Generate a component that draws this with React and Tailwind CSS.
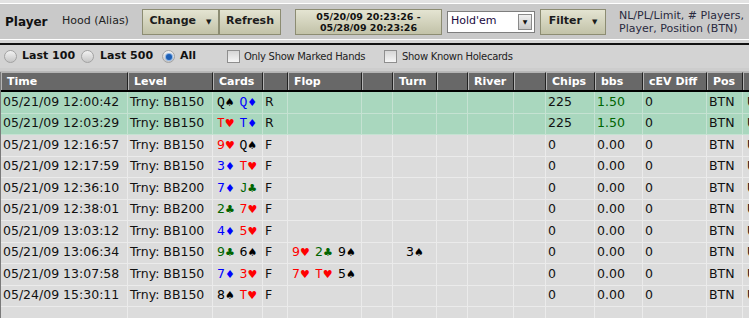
import React from "react";

const font = "font-['DejaVu_Sans',Verdana,sans-serif]";

const COLS = [
  { key: "time", label: "Time", w: "w-[127px]" },
  { key: "level", label: "Level", w: "w-[85px]" },
  { key: "cards", label: "Cards", w: "w-[50px]" },
  { key: "act", label: "", w: "w-[25px]" },
  { key: "flop", label: "Flop", w: "w-[74px]" },
  { key: "fa", label: "", w: "w-[31px]" },
  { key: "turn", label: "Turn", w: "w-[44px]" },
  { key: "ta", label: "", w: "w-[31px]" },
  { key: "river", label: "River", w: "w-[46px]" },
  { key: "ra", label: "", w: "w-[32px]" },
  { key: "chips", label: "Chips", w: "w-[49px]" },
  { key: "bbs", label: "bbs", w: "w-[48px]" },
  { key: "cev", label: "cEV Diff", w: "w-[64px]" },
  { key: "pos", label: "Pos", w: "w-[36px]" },
  { key: "more", label: "", w: "w-[100px]" },
];

const SUIT = {
  s: { g: "♠", c: "text-black" },
  h: { g: "♥", c: "text-[#ff0000]" },
  d: { g: "♦", c: "text-[#0000ff]" },
  c: { g: "♣", c: "text-[#006400]" },
};

const ROWS = [
  { t: "05/21/09 12:00:42", l: "Trny: BB150", cards: ["Qs", "Qd"], a: "R", chips: "225", bbs: "1.50", hl: true },
  { t: "05/21/09 12:03:29", l: "Trny: BB150", cards: ["Th", "Td"], a: "R", chips: "225", bbs: "1.50", hl: true },
  { t: "05/21/09 12:16:57", l: "Trny: BB150", cards: ["9h", "Qs"], a: "F" },
  { t: "05/21/09 12:17:59", l: "Trny: BB150", cards: ["3d", "Th"], a: "F" },
  { t: "05/21/09 12:36:10", l: "Trny: BB200", cards: ["7d", "Jc"], a: "F" },
  { t: "05/21/09 12:38:01", l: "Trny: BB200", cards: ["2c", "7h"], a: "F" },
  { t: "05/21/09 13:03:12", l: "Trny: BB100", cards: ["4d", "5h"], a: "F" },
  { t: "05/21/09 13:06:34", l: "Trny: BB150", cards: ["9c", "6s"], a: "F", flop: ["9h", "2c", "9s"], turn: "3s" },
  { t: "05/21/09 13:07:58", l: "Trny: BB150", cards: ["7d", "3h"], a: "F", flop: ["7h", "Th", "5s"] },
  { t: "05/24/09 15:30:11", l: "Trny: BB150", cards: ["8s", "Th"], a: "F" },
];

function Card({ c }) {
  const s = SUIT[c[1]];
  const r = c[0];
  const serif = r === "T" || r === "Q" || r === "J";
  return (
    <span className={`inline-flex w-[24px] items-center ${s.c}`}>
      <span className={serif ? "font-['Liberation_Mono',monospace] text-[13px]" : ""}>{r}</span>
      <span className="text-[11px] leading-none">{s.g}</span>
    </span>
  );
}

function Btn({ children, w, caret }) {
  return (
    <div
      className={`${w} h-[26px] shrink-0 flex items-center justify-center gap-[10px] border border-[#8c8c72] bg-gradient-to-b from-[#e4e4d2] to-[#c2c2a8] text-[11px] font-bold text-[#1c1c1c]`}
    >
      <span>{children}</span>
      {caret && <span className="text-[7px] mt-[2px]">▼</span>}
    </div>
  );
}

function Radio({ on }) {
  return (
    <span className="w-[13px] h-[13px] rounded-full border border-[#a2a2a2] bg-gradient-to-b from-[#f2f2f2] to-[#c6c6c6] flex items-center justify-center shrink-0">
      {on && <span className="w-[6px] h-[6px] rounded-full bg-[#1d5fb5] ring-1 ring-[#8fb6e6]" />}
    </span>
  );
}

function Check() {
  return <span className="w-[13px] h-[13px] border border-[#8e8e8e] bg-gradient-to-b from-[#d6d6d6] to-[#f6f6f6] shrink-0" />;
}

export default function App() {
  return (
    <div className={`w-[749px] h-[318px] overflow-hidden bg-[#d6d6d6] ${font} text-[#111]`}>
      {/* toolbar */}
      <div className="pt-[3px] bg-[#e2e2e2]">
        <div className="h-[37px] bg-[#c9c9c9] border-t border-b border-white flex items-center pl-[5px]">
          <span className="text-[12px] font-bold w-[57px] shrink-0">Player</span>
          <span className="text-[11px] text-[#222] w-[80px] shrink-0">Hood (Alias)</span>
          <Btn w="w-[77px]" caret>
            Change
          </Btn>
          <Btn w="w-[62px]">Refresh</Btn>
          <div className="w-[14px] shrink-0" />
          <div className="w-[147px] h-[26px] shrink-0 flex flex-col items-center justify-center border border-[#8c8c72] bg-gradient-to-b from-[#e4e4d2] to-[#c2c2a8] text-[9.5px] font-bold leading-[11px]">
            <span>05/20/09 20:23:26 -</span>
            <span>05/28/09 20:23:26</span>
          </div>
          <div className="w-[5px] shrink-0" />
          <div className="w-[88px] h-[22px] shrink-0 border border-[#7e7e7e] bg-white flex items-center pl-[3px] pr-[2px]">
            <span className="flex-1 text-[11px] text-[#200a40]">Hold'em</span>
            <span className="w-[14px] h-[16px] border border-[#8a8a8a] bg-gradient-to-b from-[#f0f0f0] to-[#c8c8c8] flex items-center justify-center text-[6px]">
              ▼
            </span>
          </div>
          <div className="w-[5px] shrink-0" />
          <Btn w="w-[66px]" caret>
            Filter
          </Btn>
          <div className="w-[13px] shrink-0" />
          <div className="text-[11px] leading-[13px] text-[#2a2a40] whitespace-nowrap">
            <div>NL/PL/Limit, # Players,</div>
            <div>Player, Position (BTN)</div>
          </div>
        </div>
      </div>
      <div className="h-[3px] bg-[#d4d4d4]" />
      <div className="h-[2px] bg-[#111]" />
      {/* radio row */}
      <div className="h-[23px] bg-[#d3d3d3] flex items-center pl-[4px] text-[11px] whitespace-nowrap">
        <Radio />
        <span className="ml-[5px] font-bold w-[59px] shrink-0">Last 100</span>
        <Radio />
        <span className="ml-[6px] font-bold w-[62px] shrink-0">Last 500</span>
        <Radio on />
        <span className="ml-[5px] font-bold w-[47px] shrink-0">All</span>
        <Check />
        <span className="ml-[4px] text-[#222] text-[10px] tracking-[-0.3px] w-[140px] shrink-0">Only Show Marked Hands</span>
        <Check />
        <span className="ml-[5px] text-[#222] text-[10px] tracking-[-0.3px] shrink-0">Show Known Holecards</span>
      </div>
      <div className="h-[4px] bg-[#cdcdcd] border-b border-[#b8b8b8]" />
      {/* table */}
      <div className="border-l border-[#7a7a7a]">
        <div className="flex h-[20px] bg-[#2a2a2a] border-b-2 border-black">
          {COLS.map((c) => (
            <div
              key={c.key}
              className={`${c.w} shrink-0 h-[18px] bg-[#686868] border-t border-l border-[#b4b4b4] border-r border-r-[#222] text-white text-[11px] font-bold pl-[5px] leading-[17px] whitespace-nowrap`}
            >
              {c.label}
            </div>
          ))}
        </div>
        {ROWS.map((r, i) => (
          <Row key={i} r={r} />
        ))}
        <Row r={{ t: "", l: "", cards: [], a: "" }} />
      </div>
    </div>
  );
}

function Row({ r }) {
  const bg = r.hl ? "bg-[#a9d7be]" : "bg-[#dcdcdc]";
  const line = r.hl ? "border-[#c5e2d2]" : "border-[#ebebeb]";
  const cell = (w, extra = "") => `${w} shrink-0 h-full border-r ${line} flex items-center whitespace-nowrap overflow-hidden ${extra}`;
  return (
    <div className={`flex h-[21.5px] border-b ${line} ${bg} text-[12.5px]`}>
      <div className={cell("w-[127px]", "pl-[2px]")}>{r.t}</div>
      <div className={cell("w-[85px]", "pl-[2px]")}>{r.l}</div>
      <div className={cell("w-[50px]", "pl-[4px]")}>
        {r.cards.map((c, j) => (
          <Card key={j} c={c} />
        ))}
      </div>
      <div className={cell("w-[25px]", "pl-[2px]")}>{r.a}</div>
      <div className={cell("w-[74px]", "pl-[4px]")}>
        {(r.flop || []).map((c, j) => (
          <Card key={j} c={c} />
        ))}
      </div>
      <div className={cell("w-[31px]")} />
      <div className={cell("w-[44px]", "pl-[13px]")}>{r.turn && <Card c={r.turn} />}</div>
      <div className={cell("w-[31px]")} />
      <div className={cell("w-[46px]")} />
      <div className={cell("w-[32px]")} />
      <div className={cell("w-[49px]", "pl-[2px]")}>{r.t && (r.chips || "0")}</div>
      <div className={cell("w-[48px]", "pl-[2px]")}>
        {r.t && <span className={r.bbs ? "text-[#006400]" : ""}>{r.bbs || "0.00"}</span>}
      </div>
      <div className={cell("w-[64px]", "pl-[2px]")}>{r.t && "0"}</div>
      <div className={cell("w-[36px]", "pl-[2px]")}>{r.t && "BTN"}</div>
      <div className={cell("w-[100px]", "pl-[4px]")}>{r.t && "U"}</div>
    </div>
  );
}
